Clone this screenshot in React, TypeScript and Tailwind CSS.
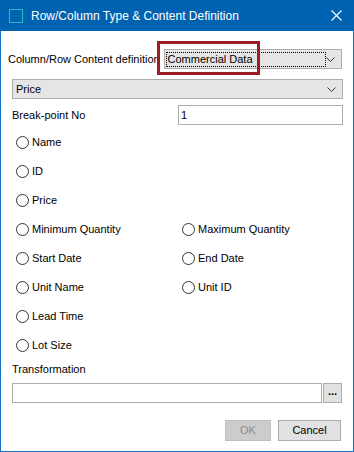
import React from 'react';

const font = { fontFamily: '"Liberation Sans", Arial, sans-serif' };

const Chevron: React.FC = () => (
  <svg width="9" height="5" viewBox="0 0 9 5" className="block">
    <path d="M0.5 0.5 L4.5 4.5 L8.5 0.5" fill="none" stroke="#333" strokeWidth="1" />
  </svg>
);

const Radio: React.FC<{ label: string }> = ({ label }) => (
  <div className="flex items-center gap-[3px]">
    <span className="w-[13px] h-[13px] rounded-full border border-[#333] bg-white shrink-0" />
    <span className="text-[11px] text-black leading-none whitespace-nowrap">{label}</span>
  </div>
);

const rows: [string, string?][] = [
  ['Name'],
  ['ID'],
  ['Price'],
  ['Minimum Quantity', 'Maximum Quantity'],
  ['Start Date', 'End Date'],
  ['Unit Name', 'Unit ID'],
  ['Lead Time'],
  ['Lot Size'],
];

export default function App() {
  return (
    <div className="w-[354px] h-[452px] flex flex-col bg-white border-x border-b border-[#1a73c4]" style={font}>
      {/* title bar */}
      <div className="h-[31px] bg-[#0063b1] flex items-center shrink-0 -mx-px">
        <span className="ml-[9px] w-[14px] h-[14px] border border-[#2bb5c8]" />
        <span className="ml-[8px] text-white text-[12px] leading-none whitespace-nowrap">Row/Column Type &amp; Content Definition</span>
        <svg width="11" height="11" viewBox="0 0 11 11" className="ml-auto mr-[12px]">
          <path d="M0.5 0.5 L10.5 10.5 M10.5 0.5 L0.5 10.5" stroke="#fff" strokeWidth="1.1" />
        </svg>
      </div>

      <div className="flex flex-col px-[11px] text-[11px] text-black">
        {/* content definition */}
        <div className="flex items-center mt-[18px] h-[20px] relative">
          <span className="ml-[-4px] w-[157px] leading-none whitespace-nowrap">Column/Row Content definition</span>
          <div className="w-[180px] h-[20px] border border-[#adadad] bg-[#e5e5e5] flex items-center pl-[1px] pr-[6px]">
            <div className="w-[160px] h-[15px] border border-dotted border-black flex items-center pl-[1px] leading-none whitespace-nowrap">
              Commercial Data
            </div>
            <span className="ml-auto"><Chevron /></span>
          </div>
          <div className="absolute left-[145px] top-[-8px] w-[103px] h-[34px] border-[3px] border-[#9b1c24]" />
        </div>

        {/* price combo */}
        <div className="mt-[10px] h-[20px] w-[331px] border border-[#adadad] bg-[#e5e5e5] flex items-center pl-[3px] pr-[6px]">
          <span className="leading-none">Price</span>
          <span className="ml-auto"><Chevron /></span>
        </div>

        {/* break point */}
        <div className="mt-[6px] flex items-center h-[20px]">
          <span className="leading-none">Break-point No</span>
          <div className="ml-auto mr-[-1px] w-[165px] h-[20px] border border-[#adadad] bg-white flex items-center pl-[2px] leading-none">
            1
          </div>
        </div>

        {/* radio options */}
        <div className="mt-[3px] flex flex-col">
          {rows.map(([a, b]) => (
            <div key={a} className="h-[29px] grid grid-cols-[166px_1fr] items-center pl-[4px]">
              <Radio label={a} />
              {b ? <Radio label={b} /> : <span />}
            </div>
          ))}
        </div>

        {/* transformation */}
        <div className="mt-[1px] h-[16px] flex items-center leading-none">Transformation</div>
        <div className="mt-[6px] flex items-center gap-[1px]">
          <div className="w-[310px] h-[20px] border border-[#adadad] bg-white" />
          <button className="w-[19px] h-[20px] border border-[#adadad] bg-[#e1e1e1] flex items-end justify-center pb-[5px] font-bold leading-none text-[11px]">
            ...
          </button>
        </div>

        {/* buttons */}
        <div className="mt-[17px] flex justify-end gap-[7px] mr-[1px]">
          <button className="w-[46px] h-[21px] border border-[#bfbfbf] bg-[#cccccc] text-[#8c8c8c] text-[11px] leading-none">OK</button>
          <button className="w-[63px] h-[21px] border border-[#adadad] bg-[#e1e1e1] text-black text-[11px] leading-none">Cancel</button>
        </div>
      </div>
    </div>
  );
}
